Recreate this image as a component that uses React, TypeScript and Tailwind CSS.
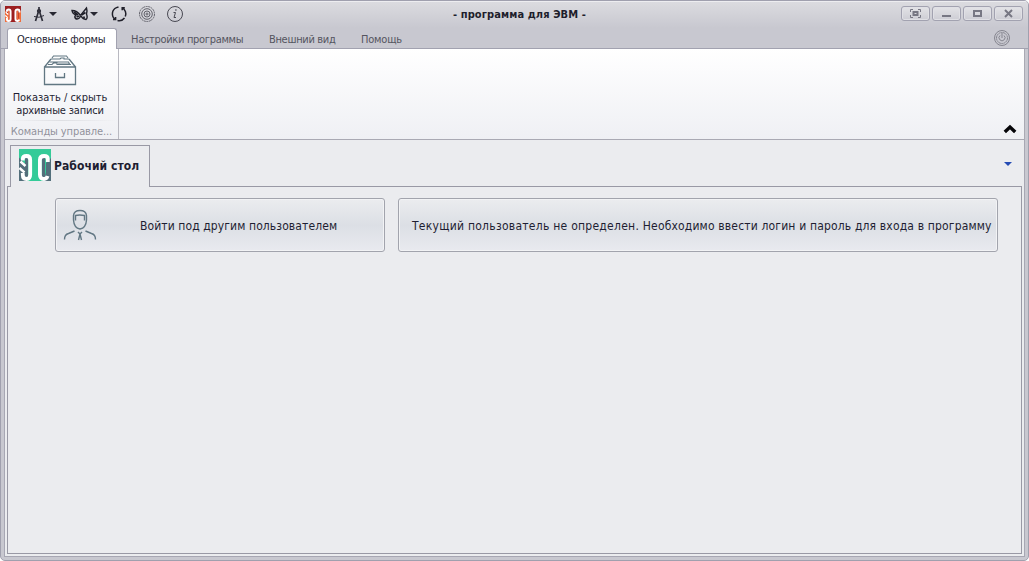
import React from "react";

const Caret = () => (
  <svg width="8" height="4" viewBox="0 0 8 4" className="shrink-0">
    <path d="M0 0h8L4 4z" fill="#282832" />
  </svg>
);

function Monogram({ size, bg, shade }: { size: number; bg: string; shade: string }) {
  return (
    <svg width={size} height={size} viewBox="0 0 32 32" className="shrink-0">
      <path d="M0 0h32v32H0z" fill={bg} />
      <path d="M0 8.500 6 15v11l2 6H0zM32 9l-5 5v9l-2 9h7zM6 8h3v21H6zM23 8h3v21h-3z" fill={shade} />
      <path
        d="M3.800 11.500V10q0-3 3.700-3 3.700 0 3.700 4v14.500q0 4.500-3.700 4.500-3.700 0-3.700-4v-2M28.800 13v-3q0-3-3.700-3-4.200 0-4.200 4v14.500q0 4.500 4.200 4.500 2.500 0 3.500-3"
        fill="none"
        stroke="#fff"
        strokeWidth="3.800"
      />
      <path d="m1.500 12.500 5 4.500M.5 19l5 4.500" fill="none" stroke="#fff" strokeWidth="2.400" />
    </svg>
  );
}

function QuickAccess() {
  return (
    <div className="flex h-[26px] w-[186px] items-center">
      <div className="w-[31px] pl-[3px]">
        <Monogram size={16} bg="#9c1f20" shade="#f06d3c" />
      </div>
      <div className="flex w-[37px] items-center gap-[4px]">
        <svg width="12" height="16" viewBox="0 0 12 16" fill="none" stroke="#30303b">
          <path d="M6 1v4M6 4 2.500 15M6 4l3.500 11" strokeWidth="1.700" />
          <path d="M1 10.500q5 2 10-1" />
          <circle cx="6" cy="5" r="1.700" fill="#30303b" />
        </svg>
        <Caret />
      </div>
      <div className="flex w-[35px] items-center gap-[1px] pl-px">
        <svg width="18" height="16" viewBox="0 0 18 16" fill="none" stroke="#20202a" strokeWidth="1.400" className="shrink-0">
          <path d="M9.500 9.500Q6 4.500 1 4.500q.5 3.500 4 4.500-2 1.500-.5 3.500 3 1.500 5.500-2.500M9.500 9.500 15.500 2q1 3 0 6 1.500 4-.5 5.500-3 0-5-3.500" />
          <path d="m10.500 9 4-2.500M3 6l4 3M5.500 11l3-1M13 10.500v2" strokeWidth="1.800" />
        </svg>
        <Caret />
      </div>
      <svg width="28" height="18" viewBox="0 0 28 18" fill="none" stroke="#20202a" strokeWidth="1.500">
        <path d="M10.300 14.300A6.700 6.700 0 0 1 11.500 2.600L13.500 2M17 2.800A6.700 6.700 0 0 1 20.300 11.500M19.500 13A6.700 6.700 0 0 1 12.500 15.500M10.600 12v2.500H8M17.200 5.200V2.700h2.600" />
      </svg>
      <svg width="28" height="18" viewBox="0 0 28 18" fill="none" stroke="#62626b">
        <circle cx="14" cy="9" r="7.500" strokeDasharray="2 .6" />
        <circle cx="14" cy="9" r="5.300" />
        <circle cx="14" cy="9" r="3" />
        <circle cx="14" cy="9" r="1" />
      </svg>
      <svg width="25" height="18" viewBox="0 0 25 18" fill="none" stroke="#484852">
        <circle cx="14" cy="9" r="7.500" />
        <path d="M12.500 7.500h2L13 12.500h2" />
        <path d="M14.300 5h1.200" strokeWidth="1.500" />
      </svg>
    </div>
  );
}

function WindowButton({ children }: { children: React.ReactNode }) {
  return (
    <div className="flex h-[15px] w-[29px] items-center justify-center rounded-[3px] border border-[#a2a2b0] bg-linear-to-b from-[#e3e3e7] to-[#cdcdd4] shadow-[inset_0_0_0_1px_#e0e0e5]">
      <svg width="11" height="9" viewBox="0 0 11 9" fill="none" stroke="#777783">
        {children}
      </svg>
    </div>
  );
}

function TitleBar() {
  return (
    <div className="flex h-[27px] shrink-0 bg-linear-to-b from-[#dcdce0] to-[#c8c8d0] pl-px shadow-[inset_0_1px_#ededf0]">
      <QuickAccess />
      <div className="flex-1 pt-[7px] pl-[265px] text-[11px] leading-[14px] font-bold tracking-[0.100px] text-[#1e1e2c]">
        - программа для ЭВМ -
      </div>
      <div className="flex gap-[2px] pt-[5px] pr-[5px]">
        <WindowButton>
          <path d="M.5 3V.5H3M8 .5h2.500V3M10.500 6v2.500H8M3 8.500H.5V6" />
          <path d="M3.500 3h4v3h-4z" strokeWidth="2" />
        </WindowButton>
        <WindowButton>
          <path d="M1 7h9" strokeWidth="2" />
        </WindowButton>
        <WindowButton>
          <path d="M2 2h7v5H2z" strokeWidth="2" />
        </WindowButton>
        <WindowButton>
          <path d="m2 1 7 7M9 1 2 8" strokeWidth="2" />
        </WindowButton>
      </div>
    </div>
  );
}

function RibbonTabs() {
  return (
    <div className="flex h-[21px] shrink-0 bg-[#c8c8d0] text-[11px] leading-[20px] text-[#55555f] shadow-[inset_0_-1px_#a2a2b0]">
      <div className="ml-[6px] h-[21px] w-[110px] rounded-t-[3px] border border-b-0 border-[#a2a2b0] bg-white pt-px pl-[9px] tracking-[-0.200px] whitespace-nowrap text-[#1e1e32]">
        Основные формы
      </div>
      <span className="ml-[14px] w-[138px] pt-[2px] tracking-[-0.310px]">Настройки программы</span>
      <span className="w-[92px] pt-[2px] tracking-[-0.320px]">Внешний вид</span>
      <span className="pt-[2px] tracking-[-0.200px]">Помощь</span>
      <div className="flex flex-1 justify-end pt-px pr-[17px]">
        <svg width="18" height="18" viewBox="0 0 18 18" fill="none" stroke="#85858f">
          <circle cx="9" cy="9" r="7.500" />
          <circle cx="9" cy="9" r="5.500" strokeDasharray="2 .4" />
          <path d="M7 6.500a3 3 0 1 0 4 0M9 4v5" />
        </svg>
      </div>
    </div>
  );
}

function Ribbon() {
  return (
    <div className="mx-[3px] flex h-[91px] shrink-0 border-x border-b border-[#a9a9b3] bg-linear-to-b from-white to-[#eff0f4]">
      <div className="flex w-[114px] flex-col items-center border-r border-[#b9b9c1] text-[11px] leading-[13px]">
        <svg width="34" height="31" viewBox="0 0 34 31" className="mt-[6px] mr-[3px]" fill="none" stroke="#617782" strokeWidth="1.300">
          <path d="M1.500 12h31v17.500h-31zM1.500 12 8 4M26 4l6.500 8" />
          <path d="m9 3 1.500-2h13L25 3M8 4h9l1-1h3v1h5M6.500 7h19l1 2H15M5 9.500h4L10.500 8H14v1.500h14" strokeWidth="1.100" />
          <path d="M12.500 18v4.500h9V18" />
        </svg>
        <div className="mt-[5px] mr-[3px] text-center whitespace-nowrap text-[#1e1e32]">
          <div className="tracking-[-0.030px]">Показать / скрыть</div>
          <div className="tracking-[-0.180px]">архивные записи</div>
        </div>
        <div className="mt-[3px] h-px w-full bg-linear-to-r from-transparent via-[#dedfe3] to-transparent" />
        <div className="mt-[4px] tracking-[-0.110px] text-[#92929c]">Команды управле...</div>
      </div>
      <div className="flex flex-1 items-end justify-end pr-[7px] pb-[5px]">
        <svg width="14" height="10" viewBox="0 0 14 10" fill="none" stroke="#050508" strokeWidth="3.400">
          <path d="m1.800 8 5.200-5 5.200 5" />
        </svg>
      </div>
    </div>
  );
}

function Workspace() {
  return (
    <div className="mx-[3px] flex flex-1 flex-col border border-t-0 border-[#a7a7b3] bg-[#ebecef] px-[2px] pb-[2px]">
      <div className="flex h-[47px] shrink-0 shadow-[inset_0_-1px_#9999a5]">
        <div className="mt-[5px] ml-[3px] flex h-[42px] w-[140px] gap-[3px] border border-b-0 border-[#9999a5] bg-[#ebecef] pt-[3px] pl-[8px]">
          <Monogram size={32} bg="#34cb98" shade="#536f7b" />
          <div className="pt-[7px] text-[12px] leading-[20px] font-bold tracking-[0.070px] whitespace-nowrap text-[#1e1e32]">
            Рабочий стол
          </div>
        </div>
        <div className="flex flex-1 justify-end pt-[22px] pr-[10px]">
          <svg width="8" height="4" viewBox="0 0 8 4">
            <path d="M0 0h8L4 4z" fill="#244bb4" />
          </svg>
        </div>
      </div>
      <div className="flex flex-1 items-start gap-[13px] border border-t-0 border-[#9999a5] pt-[11px] pl-[47px] text-[12px] text-[#1e1e32]">
        <button className="flex h-[54px] w-[330px] shrink-0 items-center rounded-[3px] border border-[#a2a4ad] bg-linear-to-b from-[#ebecef] via-[#dcdfe5] to-[#e9eaef] pl-[7px] shadow-[inset_0_0_0_1px_#f2f3f5]">
          <svg width="34" height="34" viewBox="0 0 34 34" fill="none" stroke="#627783" strokeWidth="1.400">
            <path d="M10.500 12V7.500Q11 2.500 17 2.500t6.500 5V12q-.5 8-6.500 9-6-1-6.500-9zM12.500 12.500V7.500q4-1 9 0v5M1.500 31.500q0-5 4-6l6-2.500M32.500 31.500q0-5-4-6l-6-2.500" />
            <path d="m15 24 2 2 2-2M17 26l-1.500 6M17 26l1.500 6M16 28h2" />
          </svg>
          <span className="mt-[2px] ml-[43px] tracking-[0.100px] whitespace-nowrap">Войти под другим пользователем</span>
        </button>
        <button className="flex h-[54px] w-[600px] shrink-0 items-center rounded-[3px] border border-[#a2a4ad] bg-linear-to-b from-[#ebecef] via-[#dcdfe5] to-[#e9eaef] pr-[5px] pl-[13px] shadow-[inset_0_0_0_1px_#f2f3f5]">
          <span className="mt-[2px] flex-1 text-left tracking-[0.165px] whitespace-nowrap">
            <span className="tracking-[0.265px]">Текущий пользователь не определен. </span>
            Необходимо ввести логин и пароль для входа в программу
          </span>
        </button>
      </div>
    </div>
  );
}

export default function App() {
  return (
    <div className="flex h-[561px] w-[1029px] flex-col overflow-hidden rounded-[5px] border border-[#a0a0ae] bg-[#c8c8d0] pb-[3px] font-['DejaVu_Sans_Condensed','DejaVu_Sans',sans-serif]">
      <TitleBar />
      <RibbonTabs />
      <Ribbon />
      <Workspace />
    </div>
  );
}
